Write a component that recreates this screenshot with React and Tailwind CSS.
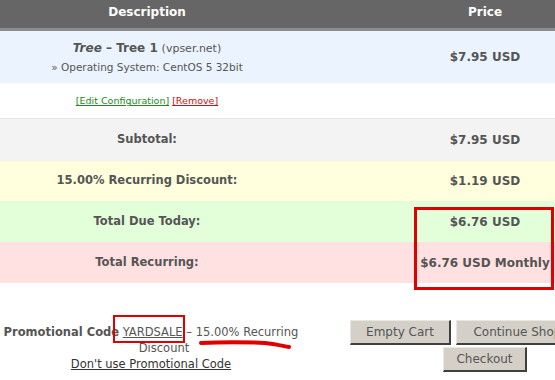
import React from 'react';

const rows = [
  { label: 'Subtotal:', price: '$7.95 USD', bg: 'bg-[#f3f3f3]', h: 'h-[42px]' },
  { label: '15.00% Recurring Discount:', price: '$1.19 USD', bg: 'bg-[#ffffdd]', h: 'h-[40px]' },
  { label: 'Total Due Today:', price: '$6.76 USD', bg: 'bg-[#e2ffda]', h: 'h-[41px]' },
  { label: 'Total Recurring:', price: '$6.76 USD Monthly', bg: 'bg-[#ffe1e1]', h: 'h-[41px]' },
];

const Btn = ({ children, className = '' }) => (
  <button
    className={`h-[25px] shrink-0 bg-[#d4d0c8] border border-t-[#e8e6e1] border-l-[#e8e6e1] border-r-[#404040] border-b-[#404040] border-r-2 border-b-2 text-[12px] text-[#555] whitespace-nowrap ${className}`}
  >
    {children}
  </button>
);

export default function App() {
  return (
    <div className="relative w-[555px] h-[380px] overflow-hidden bg-white text-[#555] font-['DejaVu_Sans',sans-serif]">
      {/* header */}
      <div className="flex items-center h-[31px] pb-[5px] bg-[#666666] border-b-[3px] border-[#8c8c8c] text-white font-bold text-[12px]">
        <div className="w-[294px] text-center">Description</div>
        <div className="ml-auto w-[140px] text-center">Price</div>
      </div>

      {/* product row */}
      <div className="flex items-center h-[52px] bg-[#ebf3fe]">
        <div className="w-[294px] text-center leading-[18px]">
          <div className="text-[12px]">
            <span className="font-bold"><i>Tree</i> – Tree 1</span>{' '}
            <span className="text-[11px]">(vpser.net)</span>
          </div>
          <div className="text-[10.5px]">» Operating System: CentOS 5 32bit</div>
        </div>
        <div className="ml-auto w-[140px] text-center font-bold text-[12px]">$7.95 USD</div>
      </div>

      <div className="flex items-center h-[36px] border-b border-[#e4e4e4] pt-[2px]">
        <div className="w-[294px] text-center text-[9.5px]">
          <a className="text-[#1c8c1c] underline">[Edit Configuration]</a>{' '}
          <a className="text-[#cc1111] underline">[Remove]</a>
        </div>
      </div>

      {rows.map((r) => (
        <div key={r.label} className={`flex items-center ${r.h} ${r.bg} font-bold text-[11.5px]`}>
          <div className="w-[294px] text-center">{r.label}</div>
          <div className="ml-auto w-[140px] text-center whitespace-nowrap text-[12px]">{r.price}</div>
        </div>
      ))}

      {/* bottom */}
      <div className="flex mt-[37px]">
        <div className="w-[302px] shrink-0 text-center text-[11.5px] leading-[16px] pt-[4px]">
          <div className="whitespace-nowrap">
            <span className="font-bold">Promotional Code</span>{' '}
            <span className="underline">YARDSALE</span> – 15.00% Recurring
          </div>
          <div className="pl-[26px]">Discount</div>
          <div>
            <a className="text-[#333] underline">Don't use Promotional Code</a>
          </div>
        </div>
        <div className="shrink-0 pl-[48px]">
          <div className="flex gap-[5px]">
            <Btn className="w-[101px]">Empty Cart</Btn>
            <Btn className="w-[150px]">Continue Shopping</Btn>
          </div>
          <Btn className="w-[84px] ml-[93px] mt-[2px]">Checkout</Btn>
        </div>
      </div>

      {/* red annotations */}
      <div className="absolute left-[414px] top-[207px] w-[140px] h-[83px] border-[3px] border-[#e00000]" />
      <div className="absolute left-[113px] top-[315px] w-[72px] h-[28px] border-2 border-[#e00000]" />
      <svg className="absolute left-[195px] top-[337px]" width="100" height="16" viewBox="0 0 100 16">
        <path
          d="M6 6 C 25 5, 50 5, 70 6 C 80 7, 88 9, 94 10"
          stroke="#e00000"
          strokeWidth="4"
          strokeLinecap="round"
          fill="none"
        />
      </svg>
    </div>
  );
}
